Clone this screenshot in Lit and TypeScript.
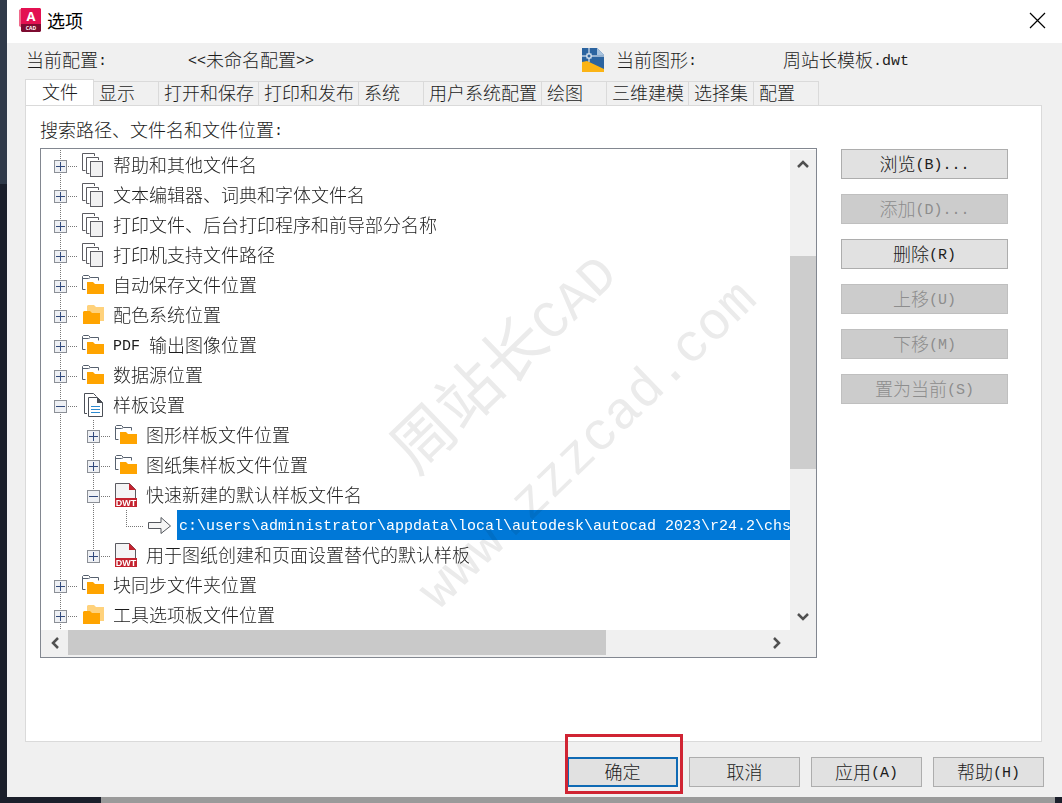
import { LitElement, html, svg, css, nothing } from "lit";
import { customElement, property, state } from "lit/decorators.js";
import { classMap } from "lit/directives/class-map.js";

type IconKind = "files" | "folders" | "stack" | "docs" | "dwt" | "arrow";
interface Row {
  label: string;
  icon: IconKind;
  level: number;
  open?: boolean;
  last?: boolean;
}

const ROWS: Row[] = [
  { label: "帮助和其他文件名", icon: "files", level: 0 },
  { label: "文本编辑器、词典和字体文件名", icon: "files", level: 0 },
  { label: "打印文件、后台打印程序和前导部分名称", icon: "files", level: 0 },
  { label: "打印机支持文件路径", icon: "files", level: 0 },
  { label: "自动保存文件位置", icon: "folders", level: 0 },
  { label: "配色系统位置", icon: "stack", level: 0 },
  { label: "PDF 输出图像位置", icon: "folders", level: 0 },
  { label: "数据源位置", icon: "folders", level: 0 },
  { label: "样板设置", icon: "docs", level: 0, open: true },
  { label: "图形样板文件位置", icon: "folders", level: 1 },
  { label: "图纸集样板文件位置", icon: "folders", level: 1 },
  { label: "快速新建的默认样板文件名", icon: "dwt", level: 1, open: true },
  {
    label: "c:\\users\\administrator\\appdata\\local\\autodesk\\autocad 2023\\r24.2\\chs",
    icon: "arrow",
    level: 2,
    last: true,
  },
  { label: "用于图纸创建和页面设置替代的默认样板", icon: "dwt", level: 1, last: true },
  { label: "块同步文件夹位置", icon: "folders", level: 0 },
  { label: "工具选项板文件位置", icon: "stack", level: 0 },
];

const TABS = ["文件", "显示", "打开和保存", "打印和发布", "系统", "用户系统配置", "绘图", "三维建模", "选择集", "配置"];

const SIDE: [string, boolean][] = [
  ["浏览(B)...", true],
  ["添加(D)...", false],
  ["删除(R)", true],
  ["上移(U)", false],
  ["下移(M)", false],
  ["置为当前(S)", false],
];

// Half-width runs are set in the monospaced face, full-width runs in the CJK face.
const mixed = (text: string) =>
  (text.match(/[\x20-\x7e]+|[^\x20-\x7e]+/g) ?? []).map((run) =>
    /^[\x20-\x7e]/.test(run) ? html`<span class="latin">${run}</span>` : run
  );

const shared = css`
  * {
    box-sizing: border-box;
  }
  .latin {
    font-family: "Liberation Mono", monospace;
    font-size: 15px;
    line-height: 1px;
    vertical-align: 2px;
    white-space: pre;
  }
  button {
    font: inherit;
    color: inherit;
    padding: 0;
    margin: 0;
    border: 0;
    background: none;
    border-radius: 0;
  }
  svg {
    display: block;
  }
`;

const ICONS = {
  files: svg`
    <path d="M3.5 17.500H.5V.5h12v2.500M7.500 20.500H4.500V4.500h12v2.500" fill="none" stroke="#5c5c62" />
    <rect x="8.500" y="8.500" width="12" height="15" fill="#f1f1f2" stroke="#5c5c62" />`,
  folders: svg`
    <path d="M3.500 16.500H.5V3.500l1-1h5l2 2h8v3M.5 5.500h6l2-1" fill="none" stroke="#56606e" />
    <path d="M5 21V9h6l2 2h9v10z" fill="#ffa400" />`,
  stack: svg`
    <path d="M5 14V3l1-1h6l2 2h8v14h-5z" fill="#ffd27c" />
    <path d="M1 21V9l1-1h6l2 2h8v11z" fill="#ffa400" />`,
  docs: svg`
    <path d="M5 20.500H2.500V.5h9l3 3" fill="none" stroke="#4b4f57" />
    <path d="M6.500 4.500h9l5 5v14h-14z" fill="#fff" stroke="#4b4f57" />
    <path d="M15 4v6h6z" fill="#4b4f57" />
    <path d="M9 13.500h9M9 16.500h9M9 19.500h9" stroke="#2c8ad0" />`,
  dwt: svg`
    <path d="M.5 23V.5h14l6 6V23z" fill="#f4f4f5" stroke="#5a5a60" />
    <path d="M14 0v7h7z" fill="#c4232f" />
    <rect x="0" y="15" width="22" height="9" fill="#c4232f" />
    <text x="11" y="23" text-anchor="middle" font-family="Liberation Sans, sans-serif" font-weight="700" font-size="9" fill="#fff">DWT</text>`,
  arrow: svg`
    <path d="M.5 9.500H13V4.500L22.500 13 13 20.500V15.500H.5z" fill="#f5f5f5" stroke="#55585e" />`,
};

@customElement("tree-row")
class TreeRow extends LitElement {
  @property({ attribute: false }) row!: Row;
  @property({ type: Boolean }) selected = false;

  static styles = [
    shared,
    css`
      :host {
        display: flex;
        height: 30px;
        padding-left: 9px;
      }
      .indent {
        flex: 0 0 33px;
      }
      .joint {
        display: grid;
        flex: 0 0 32px;
      }
      .joint > * {
        grid-area: 1 / 1;
      }
      .toggle {
        width: 13px;
        height: 13px;
        margin: 10px 0 0 4px;
      }
      .icon {
        flex: 0 0 24px;
        padding-top: 3px;
      }
      .label {
        margin-left: 5px;
        padding: 0 2px;
        line-height: 28px;
        white-space: nowrap;
      }
      .chosen {
        flex: 1;
        background: #0078d7;
        color: #fff;
      }
    `,
  ];

  private line(d: string) {
    return svg`<path d=${d} fill="none" stroke="#777" stroke-dasharray="1 1" />`;
  }

  render() {
    const { label, icon, level, open, last } = this.row;
    const indents = Array.from({ length: level }, (_, i) => i);
    return html`
      ${indents.map(
        () => html`<span class="indent"><svg width="33" height="30">
          ${this.line("M10.500 0V30")}
        </svg></span>`
      )}
      <span class="joint">
        <svg width="32" height="30">
          ${this.line(last ? "M10.500 0V17" : "M10.500 0V30")}${this.line("M10 16.500H27")}
        </svg>
        ${icon === "arrow"
          ? nothing
          : html`<button class="toggle" aria-label=${label} aria-expanded=${open ? "true" : "false"}>
              <svg width="13" height="13">
                <rect x=".5" y=".5" width="12" height="12" fill="#eef0f4" stroke="#8b8f96" />
                <path d=${open ? "M2 6.500h9" : "M2 6.500h9M6.500 2v9"} stroke="#31497c" />
              </svg>
            </button>`}
      </span>
      <span class="icon"><svg width="24" height="24">${ICONS[icon]}</svg></span>
      <span class=${classMap({ label: true, chosen: this.selected })}>${mixed(label)}</span>
    `;
  }
}

@customElement("app-root")
class AppRoot extends LitElement {
  @state() private tab = 0;
  @state() private selected = 12;

  static styles = [
    shared,
    css`
      :host {
        box-sizing: border-box;
        display: flex;
        min-height: 100vh;
        padding: 0 0 6px 7px;
        background:
          linear-gradient(#9a9a9a, #9a9a9a) 101px 100% / calc(100% - 108px) 6px no-repeat,
          linear-gradient(#303a49 184px, #1b1f2b 184px);
        color: #1c1c1c;
        font: 300 18px/24px "Noto Sans CJK SC", sans-serif;
      }
      .dialog {
        flex: 1;
        min-width: 0;
        display: flex;
        flex-direction: column;
        background: #f0f0f0;
      }
      .title {
        display: flex;
        align-items: center;
        gap: 6px;
        height: 43px;
        padding: 0 16px 3px 12px;
        background: #fff;
        color: #000;
      }
      .title h1 {
        flex: 1;
        margin: 0;
        font-size: 18px;
        font-weight: 400;
      }
      .profile {
        display: grid;
        grid-template-columns: 162fr 394fr 34px 167fr 279fr;
        align-items: center;
        height: 36px;
        padding: 0 0 2px 19px;
        line-height: 20px;
      }
      .profile span {
        padding-bottom: 2px;
      }
      .tabs {
        display: flex;
        align-items: flex-end;
        margin: 0 20px -1px 18px;
        height: 27px;
      }
      .tab {
        height: 25px;
        min-width: 65px;
        padding: 0 4px 3px 5px;
        border: 1px solid #dadada;
        border-left: 0;
        text-align: left;
        line-height: 20px;
        white-space: nowrap;
      }
      .active {
        width: 69px;
        height: 27px;
        padding: 0 16px 5px;
        border-left: 1px solid #dadada;
        border-bottom: 0;
        background: #fff;
      }
      .panel {
        flex: 1;
        margin: 0 20px 0 18px;
        padding: 12px 33px 12px 14px;
        border: 1px solid #dadada;
        background: #fff;
      }
      .caption {
        margin: 0;
        padding-bottom: 8px;
        line-height: 22px;
      }
      .columns {
        display: flex;
        align-items: flex-start;
        gap: 24px;
      }
      .tree {
        flex: 1;
        min-width: 0;
        display: grid;
        grid-template-columns: minmax(0, 1fr) 26px;
        padding-top: 1px;
        border: 1px solid #828790;
      }
      .rows {
        position: relative;
        overflow: hidden;
        isolation: isolate;
        background: #fff;
      }
      .mark {
        position: absolute;
        font: 400 63px/80px "Noto Sans CJK SC", sans-serif;
        color: #ebebeb;
        mix-blend-mode: multiply;
        white-space: nowrap;
        transform: translate(-50%, -50%) rotate(-44deg);
        pointer-events: none;
      }
      .brand {
        left: 459px;
        top: 208px;
      }
      .site {
        left: 540px;
        top: 288px;
      }
      .mark .latin {
        font-size: 53px;
      }
      .vbar,
      .hbar {
        display: flex;
        background: #f0f0f0;
      }
      .vbar {
        flex-direction: column;
      }
      .hbar {
        height: 27px;
        padding-bottom: 2px;
      }
      .arrow {
        display: grid;
        place-items: center;
        flex: 0 0 27px;
      }
      .before {
        flex: 79;
      }
      .vthumb {
        flex: 214;
        background: #cdcdcd;
      }
      .after {
        flex: 134;
      }
      .hthumb {
        flex: 537;
        background: #c9c9c9;
      }
      .hafter {
        flex: 157;
      }
      .corner {
        background: #f0f0f0;
      }
      .side {
        flex: 0 0 167px;
        display: grid;
        gap: 15px;
        padding-top: 1px;
      }
      .push {
        height: 30px;
        padding-bottom: 3px;
        border: 1px solid #adadad;
        background: #e1e1e1;
        line-height: 24px;
      }
      .push:disabled {
        background: #ccc;
        border-color: #bfbfbf;
        color: #8d8d8d;
      }
      .footer {
        display: flex;
        justify-content: flex-end;
        gap: 11px;
        padding: 15px 18px 10px;
      }
      .footer .push {
        width: 111px;
      }
      .default {
        position: relative;
        display: grid;
      }
      .default .push {
        border: 2px solid #0f6ab4;
        line-height: 22px;
      }
      .focus {
        position: absolute;
        inset: -23px -5px -7px -2px;
        border: 3px solid #d02433;
        pointer-events: none;
      }
    `,
  ];

  private chevron(d: string) {
    return html`<svg width="14" height="14" viewBox="0 0 14 14">
      <path d=${d} fill="none" stroke="#505050" stroke-width="2.500" />
    </svg>`;
  }

  render() {
    return html`
      <main class="dialog">
        <header class="title">
          <svg width="22" height="24" viewBox="0 0 22 24">
            <path d="M0 2l3-2v20l-3-2z" fill="#f06a8c" />
            <path d="M2 0h19l1 1v16H2z" fill="#e31051" />
            <path d="M2 16h20v7l-1 1H3l-1-1z" fill="#7d0b30" />
            <text x="12" y="13" text-anchor="middle" font-family="Open Sans, sans-serif" font-weight="700" font-size="13" fill="#fff">A</text>
            <text x="12" y="22" text-anchor="middle" font-family="Open Sans, sans-serif" font-weight="700" font-size="5" fill="#fff">CAD</text>
          </svg>
          <h1>选项</h1>
          <button aria-label="关闭">
            <svg width="17" height="17" viewBox="0 0 17 17">
              <path d="M1 1l15 15M16 1L1 16" stroke="#000" stroke-width="1.200" />
            </svg>
          </button>
        </header>
        <div class="profile">
          <span>${mixed("当前配置:")}</span>
          <span>${mixed("<<未命名配置>>")}</span>
          <svg width="22" height="24" viewBox="0 0 22 24">
            <path d="M0 0h15l7 7v17H0z" fill="#2c64a0" />
            <path d="M15 0v7h7z" fill="#a9c4df" />
            <path d="M0 14l5-1 17 8v3H0z" fill="#fbb416" />
            <path d="M7 0v6M7 10v4M0 8h5M9 8h13" stroke="#fff" />
            <rect x="5" y="6" width="4" height="4" fill="none" stroke="#fff" />
          </svg>
          <span>${mixed("当前图形:")}</span>
          <span>${mixed("周站长模板.dwt")}</span>
        </div>
        <div class="tabs" role="tablist">
          ${TABS.map(
            (name, i) => html`<button
              role="tab"
              class=${classMap({ tab: true, active: i === this.tab })}
              aria-selected=${i === this.tab ? "true" : "false"}
              @click=${() => (this.tab = i)}
            >${name}</button>`
          )}
        </div>
        <section class="panel" role="tabpanel">
          <p class="caption" id="caption">${mixed("搜索路径、文件名和文件位置:")}</p>
          <div class="columns">
            <div class="tree">
              <div class="rows" role="tree" aria-labelledby="caption">
                ${ROWS.map(
                  (row, i) => html`<tree-row
                    role="treeitem"
                    .row=${row}
                    ?selected=${i === this.selected}
                    @click=${() => (this.selected = i)}
                  ></tree-row>`
                )}
                <div class="mark brand">${mixed("周站长CAD")}</div>
                <div class="mark site">${mixed("www.zzzcad.com")}</div>
              </div>
              <div class="vbar">
                <span class="arrow">${this.chevron("M2 10l5-5 5 5")}</span>
                <span class="before"></span>
                <span class="vthumb"></span>
                <span class="after"></span>
                <span class="arrow">${this.chevron("M2 4l5 5 5-5")}</span>
              </div>
              <div class="hbar">
                <span class="arrow">${this.chevron("M10 2L5 7l5 5")}</span>
                <span class="hthumb"></span>
                <span class="hafter"></span>
                <span class="arrow">${this.chevron("M4 2l5 5-5 5")}</span>
              </div>
              <div class="corner"></div>
            </div>
            <div class="side">
              ${SIDE.map(
                ([name, enabled]) => html`<button class="push" ?disabled=${!enabled}>${mixed(name)}</button>`
              )}
            </div>
          </div>
        </section>
        <footer class="footer">
          <span class="default"><button class="push">确定</button><span class="focus"></span></span>
          <button class="push">取消</button>
          <button class="push">${mixed("应用(A)")}</button>
          <button class="push">${mixed("帮助(H)")}</button>
        </footer>
      </main>
    `;
  }
}
